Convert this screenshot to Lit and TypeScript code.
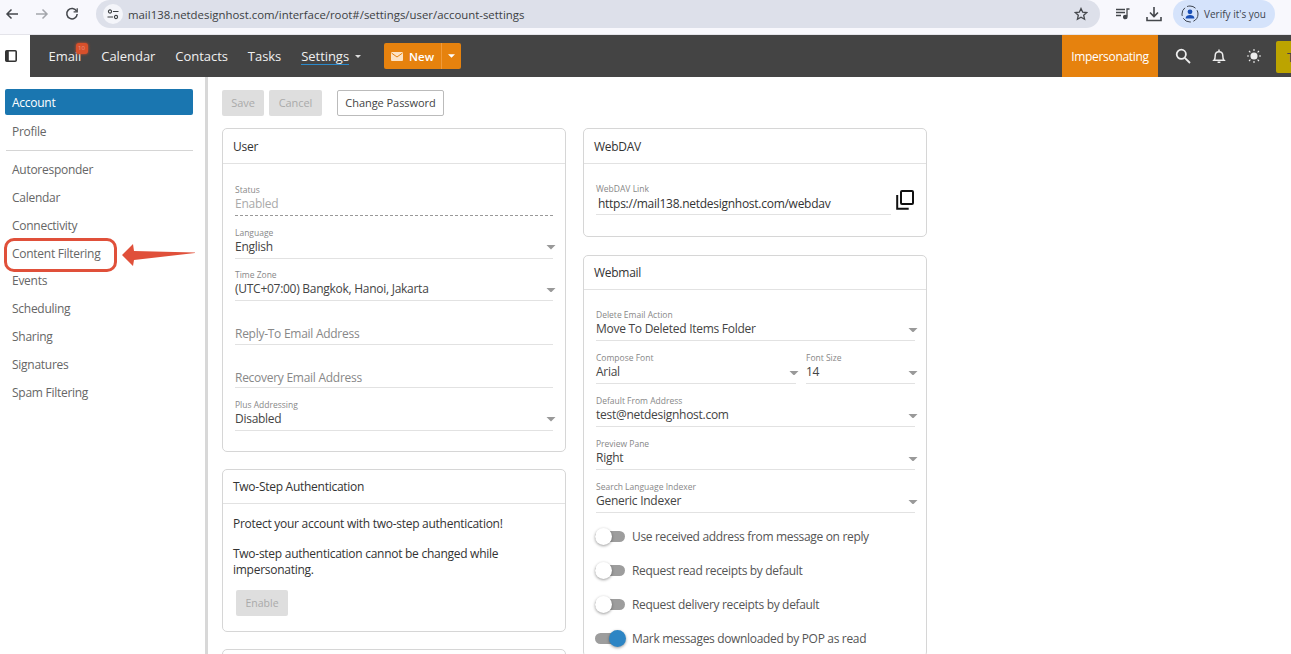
import { LitElement, html, css } from "lit";
import { customElement } from "lit/decorators.js";

const caret = html`<svg class="caret" width="10" height="5" viewBox="0 0 10 5"><path d="M0 0h10L5 5z" fill="currentColor"/></svg>`;

@customElement("app-root")
export class AppRoot extends LitElement {
  static styles = css`
    :host { display: block; width: 1291px; height: 654px; overflow: hidden; position: relative; background: #fff;
      font-family: "Open Sans", "Noto Sans", sans-serif; font-size: 12px; letter-spacing: -0.27px; color: #333; }
    * { box-sizing: border-box; }
    .chrome { height: 35px; background: #f8f8fd; border-bottom: 1px solid #e4e4ea; display: flex; align-items: flex-start; letter-spacing: 0; }
    .chrome-nav { display: flex; width: 96px; height: 28px; align-items: center; padding-left: 5px; gap: 16px; color: #44474c; }
    .chrome-nav svg { display: block; flex: none; }
    .pill { width: 1004px; height: 28px; background: #dde0ea; border-radius: 14px; display: flex; align-items: center; padding: 0 12px 0 7px; color: #3c4043; font-size: 11.4px; }
    .tune { width: 20px; height: 20px; border-radius: 50%; background: #f4f5fa; margin-right: 5px; display: flex; align-items: center; justify-content: center; flex: none; }
    .url { flex: 1; white-space: nowrap; }
    .actions { display: flex; align-items: center; height: 28px; padding-left: 16px; gap: 16px; color: #44474c; }
    .verify { width: 102px; height: 28px; margin-left: -5px; background: #d5e3fb; border-radius: 14px; display: flex; align-items: center; gap: 5px; padding-left: 8px; font-size: 10px; color: #3d4450; white-space: nowrap; }
    .nav-row { display: flex; height: 42px; }
    .toggle-box { width: 30px; display: flex; align-items: center; padding-left: 5px; }
    .nav { flex: 1; background: #444; color: #f0f0f0; display: flex; align-items: center; font-size: 13px; letter-spacing: 0; position: relative; }
    .links { display: flex; align-items: center; padding-left: 18.5px; gap: 20px; letter-spacing: -0.05px; }
    .link { position: relative; white-space: nowrap; line-height: 18px; }
    .link.on { border-bottom: 1.5px solid #2b8acb; line-height: 15px; margin-top: 1px; }
    .settings { display: flex; align-items: center; gap: 6px; }
    .settings .caret { color: #ddd; width: 6px; height: 3px; }
    .badge { position: absolute; left: 27px; top: -4px; width: 12px; height: 11px; border-radius: 3px; background: #d8502b; box-shadow: 0 0 3px #d8502b; color: #e98; font-size: 6px; text-align: center; line-height: 11px; }
    .new { display: flex; height: 26px; margin-left: 23px; background: #e6820e; border-radius: 2px; color: #fff; font-weight: 600; font-size: 11.5px; align-items: stretch; }
    .new-main { width: 58px; display: flex; align-items: center; justify-content: center; gap: 6px; border-right: 1px solid #f09a3a; }
    .new-drop { width: 19px; display: flex; align-items: center; justify-content: center; }
    .new-drop .caret { width: 7px; height: 4px; }
    .spacer { flex: 1; }
    .imp { width: 96px; height: 42px; background: #e6820e; display: flex; align-items: center; justify-content: center; font-size: 12px; letter-spacing: -0.3px; color: #fff; }
    .nav-icons { display: flex; align-items: center; gap: 21px; padding-left: 17px; width: 133px; height: 42px; }
    .nav-icons svg { display: block; flex: none; }
    .avatar { width: 15px; height: 32px; background: #bca400; border-radius: 2px 0 0 2px; margin-left: -6px; margin-top: 2px; flex: none; color: #444; font-size: 13px; padding-left: 11px; line-height: 32px; overflow: hidden; }
    .body { display: flex; height: 577px; overflow: hidden; }
    .side { width: 208px; border-right: 3px solid #d8d8d8; padding: 12px 0 0 5px; flex: none; color: #666; }
    .side-item { width: 188px; height: 27.8px; padding-left: 7px; display: flex; align-items: center; border-radius: 2px; white-space: nowrap; }
    .side-item.on { background: #1a76b0; color: #fff; height: 26px; margin-bottom: 2.5px; }
    .side-sep { width: 187px; height: 1px; background: #d5d5d5; margin: 4.5px 0 5px 1px; }
    .main { padding: 13px 0 0 14px; flex: 1; min-width: 0; }
    .bar { display: flex; align-items: center; height: 26px; margin-bottom: 12px; font-size: 11px; letter-spacing: -0.05px; }
    .btn { height: 26px; display: flex; align-items: center; justify-content: center; border-radius: 2px; background: #dedede; color: #aaa; padding-bottom: 1px; }
    .btn.save { width: 42px; margin-right: 5px; }
    .btn.cancel { width: 53px; margin-right: 15px; }
    .btn.outline { width: 107px; background: #fff; border: 1px solid #bbb; color: #444; }
    .cols { display: flex; gap: 17px; align-items: flex-start; }
    .col { width: 344px; display: flex; flex-direction: column; flex: none; }
    .card { border: 1px solid #d6d6d6; border-radius: 5px; background: #fff; margin-bottom: 18px; }
    .card-h { height: 35px; border-bottom: 1px solid #e2e2e2; display: flex; align-items: center; padding-left: 10px; color: #333; }
    .card-h.s { height: 34px; }
    .user { height: 324px; margin-bottom: 17px; }
    .fields { padding: 0 12px; }
    .f { height: 42.5px; display: flex; flex-direction: column; justify-content: flex-end; border-bottom: 1px solid #e2e2e2; position: relative; color: #444; }
    .f .l { font-size: 8.5px; letter-spacing: 0; color: #888; line-height: 11px; }
    .f .v { line-height: 18px; height: 20px; white-space: nowrap; }
    .f .caret { position: absolute; right: -3px; bottom: 8px; color: #999; width: 10px; height: 4.5px; }
    .f .ph { color: #888; line-height: 20px; height: 20px; }
    .f.dis { border-bottom: 1px dashed #999; height: 52px; }
    .f.dis .v { color: #aaa; }
    .f.tall { height: 43.5px; }
    .f.low .ph { height: 19px; }
    .two { height: 163px; margin-bottom: 17px; }
    .two p { margin: 0; line-height: 16px; color: #333; }
    .gap { height: 14px; }
    .two-b { padding: 12px 10px 0 10px; }
    .enable { width: 52px; margin: 12px 0 0 3px; font-size: 10.5px; letter-spacing: 0; }
    .stub { height: 40px; margin: 0; }
    .dav { height: 109px; }
    .dav-row { display: flex; align-items: flex-start; padding-left: 12px; gap: 5px; }
    .dav-f { width: 295px; height: 51px; display: flex; flex-direction: column; justify-content: flex-end; border-bottom: 1px solid #e2e2e2; }
    .dav-f .l { font-size: 8.5px; letter-spacing: 0; color: #888; line-height: 11px; }
    .dav-f .v { padding-left: 2px; height: 20px; line-height: 19px; color: #333; white-space: nowrap; }
    .dav-row svg { margin-top: 26px; flex: none; }
    .webmail { margin: 0; }
    .wm-fields { padding: 8px 11px 0 12px; }
    .wm-fields .f { height: 43px; }
    .row2 { display: flex; gap: 10px; }
    .row2 .f { flex: 1; }
    .row2 .f:last-child { flex: none; width: 109px; }
    .tg { height: 34.2px; display: flex; align-items: center; gap: 7px; color: #555; white-space: nowrap; padding-left: 11px; letter-spacing: -0.33px; }
    .tg-list { padding-top: 6px; }
    .sw { width: 30px; height: 11px; border-radius: 6px; background: #9d9d9d; position: relative; flex: none; }
    .sw i { position: absolute; left: 0; top: -3px; width: 17px; height: 17px; border-radius: 50%; background: #fff; box-shadow: 0 1px 3px rgba(0,0,0,.4); }
    .sw.on i { left: 13.5px; background: #2d85c4; }
    .ann-box { position: absolute; left: 4px; top: 238px; width: 113px; height: 34px; border: 3px solid #e0503a; border-radius: 10px; }
    .ann-arrow { position: absolute; left: 121px; top: 243px; }
  `;

  field(label: string, value: string) {
    return html`<div class="f"><span class="l">${label}</span><span class="v">${value}</span>${caret}</div>`;
  }

  render() {
    return html`
      <div class="chrome">
        <div class="chrome-nav">
          <svg width="14" height="14" viewBox="0 0 14 14" fill="none" stroke="currentColor" stroke-width="1.5"><path d="M13 7H2M6.5 2.5L2 7l4.5 4.5"/></svg>
          <svg width="14" height="14" viewBox="0 0 14 14" fill="none" stroke="#a4a6ac" stroke-width="1.5"><path d="M1 7h11M7.5 2.5L12 7l-4.5 4.5"/></svg>
          <svg width="14" height="14" viewBox="0 0 14 14" fill="none" stroke="currentColor" stroke-width="1.5"><path d="M11.6 4.2A5.2 5.2 0 1 0 12.2 7"/><path d="M12.2 1.2v3.6H8.6" stroke-width="1.3"/></svg>
        </div>
        <div class="pill">
          <span class="tune"><svg width="12" height="11" viewBox="0 0 12 11" fill="none" stroke="#3c4043" stroke-width="1.1"><circle cx="3" cy="2.5" r="1.6"/><path d="M6 2.5h5.5M.5 8H6"/><circle cx="9" cy="8" r="1.6"/></svg></span>
          <span class="url">mail138.netdesignhost.com/interface/root#/settings/user/account-settings</span>
          <svg width="14" height="14" viewBox="0 0 14 14" fill="none" stroke="#44474c" stroke-width="1.3"><path d="M7 1.5l1.7 3.7 4 .4-3 2.7.9 4L7 10.2l-3.6 2.1.9-4-3-2.7 4-.4z"/></svg>
        </div>
        <div class="actions">
          <svg width="14" height="12" viewBox="0 0 14 12" fill="none" stroke="currentColor" stroke-width="1.3"><path d="M0 1.5h9M0 4.5h9M0 7.5h5M13.5 1H11v7.5"/><circle cx="9.3" cy="9" r="1.7" fill="currentColor"/></svg>
          <svg width="16" height="15" viewBox="0 0 16 15" fill="none" stroke="currentColor" stroke-width="1.6"><path d="M8 0v9M4 5.5L8 9.5l4-4M1 10v3.5h14V10"/></svg>
          <div class="verify">
            <svg width="18" height="18" viewBox="0 0 18 18"><circle cx="9" cy="9" r="8" fill="none" stroke="#3d4450" stroke-width="1" stroke-dasharray="9 2.5"/><circle cx="9" cy="6.8" r="2.4" fill="#1a4fb5"/><path d="M4.6 13.5c0-2.4 2.2-3.4 4.4-3.4s4.4 1 4.4 3.4z" fill="#1a4fb5"/></svg>
            <span>Verify it's you</span>
          </div>
        </div>
      </div>

      <div class="nav-row">
        <div class="toggle-box">
          <svg width="12" height="12" viewBox="0 0 12 12"><rect x=".8" y=".8" width="10.4" height="10.4" rx="1" fill="#fff" stroke="#333" stroke-width="1.6"/><rect x=".8" y=".8" width="3" height="10.4" fill="#333"/></svg>
        </div>
        <div class="nav">
          <div class="links">
            <span class="link">Email<span class="badge">10</span></span>
            <span class="link">Calendar</span>
            <span class="link">Contacts</span>
            <span class="link">Tasks</span>
            <span class="settings"><span class="link on">Settings</span>${caret}</span>
          </div>
          <div class="new">
            <div class="new-main">
              <svg width="12" height="9" viewBox="0 0 12 9"><rect width="12" height="9" rx="1" fill="#fde3c4"/><path d="M.5 1L6 5l5.5-4" fill="none" stroke="#e6820e" stroke-width="1"/></svg>
              <span>New</span>
            </div>
            <div class="new-drop">${caret}</div>
          </div>
          <div class="spacer"></div>
          <div class="imp">Impersonating</div>
          <div class="nav-icons">
            <svg width="16" height="16" viewBox="0 0 16 16" fill="none" stroke="#eee" stroke-width="1.8"><circle cx="6.3" cy="6.3" r="4.6"/><path d="M9.8 9.8L15 15"/></svg>
            <svg width="14" height="15" viewBox="0 0 14 15" fill="none" stroke="#eee" stroke-width="1.5"><path d="M2 11.2c1-1 1.2-2 1.2-4.4 0-2.3 1.6-4 3.8-4s3.8 1.7 3.8 4c0 2.4.2 3.4 1.2 4.4z"/><path d="M5.6 13.2h2.8M7 .6v2" /></svg>
            <svg width="14" height="14" viewBox="0 0 14 14" fill="#eee" stroke="#eee" stroke-width="1.1"><circle cx="7" cy="7" r="3"/><path d="M7 0v2M7 12v2M0 7h2M12 7h2M2 2l1.4 1.4M10.6 10.6L12 12M2 12l1.4-1.4M10.6 3.4L12 2"/></svg>
            <div class="avatar">T</div>
          </div>
        </div>
      </div>

      <div class="body">
        <div class="side">
          <div class="side-item on">Account</div>
          <div class="side-item">Profile</div>
          <div class="side-sep"></div>
          ${["Autoresponder", "Calendar", "Connectivity", "Content Filtering", "Events", "Scheduling", "Sharing", "Signatures", "Spam Filtering"].map(
            (s) => html`<div class="side-item">${s}</div>`
          )}
        </div>
        <div class="main">
          <div class="bar">
            <div class="btn save">Save</div>
            <div class="btn cancel">Cancel</div>
            <div class="btn outline">Change Password</div>
          </div>
          <div class="cols">
            <div class="col">
              <div class="card user">
                <div class="card-h">User</div>
                <div class="fields">
                  <div class="f dis"><span class="l">Status</span><span class="v">Enabled</span></div>
                  ${this.field("Language", "English")}
                  ${this.field("Time Zone", "(UTC+07:00) Bangkok, Hanoi, Jakarta")}
                  <div class="f tall"><span class="ph">Reply-To Email Address</span></div>
                  <div class="f tall low"><span class="ph">Recovery Email Address</span></div>
                  ${this.field("Plus Addressing", "Disabled")}
                </div>
              </div>
              <div class="card two">
                <div class="card-h s">Two-Step Authentication</div>
                <div class="two-b">
                  <p>Protect your account with two-step authentication!</p>
                  <div class="gap"></div>
                  <p>Two-step authentication cannot be changed while impersonating.</p>
                  <div class="btn enable">Enable</div>
                </div>
              </div>
              <div class="card stub"></div>
            </div>
            <div class="col">
              <div class="card dav">
                <div class="card-h">WebDAV</div>
                <div class="dav-row">
                  <div class="dav-f"><span class="l">WebDAV Link</span><span class="v">https://mail138.netdesignhost.com/webdav</span></div>
                  <svg width="18" height="20" viewBox="0 0 18 20" fill="none" stroke="#111" stroke-width="2"><rect x="5" y="1" width="12" height="13" rx="1"/><path d="M1.2 5v13.8h11.5"/></svg>
                </div>
              </div>
              <div class="card webmail">
                <div class="card-h s">Webmail</div>
                <div class="wm-fields">
                  ${this.field("Delete Email Action", "Move To Deleted Items Folder")}
                  <div class="row2">
                    ${this.field("Compose Font", "Arial")}
                    ${this.field("Font Size", "14")}
                  </div>
                  ${this.field("Default From Address", "test@netdesignhost.com")}
                  ${this.field("Preview Pane", "Right")}
                  ${this.field("Search Language Indexer", "Generic Indexer")}
                </div>
                <div class="tg-list">
                  ${[["Use received address from message on reply", false], ["Request read receipts by default", false], ["Request delivery receipts by default", false], ["Mark messages downloaded by POP as read", true]].map(
                    ([t, on]) => html`<div class="tg"><span class="sw ${on ? "on" : ""}"><i></i></span>${t}</div>`
                  )}
                </div>
              </div>
            </div>
          </div>
        </div>
      </div>

      <div class="ann-box"></div>
      <svg class="ann-arrow" width="76" height="24" viewBox="0 0 76 24"><path d="M1 12L12 1l1 7 61 1.5v.5L13 17l-1 6z" fill="#e0503a"/></svg>
    `;
  }
}
